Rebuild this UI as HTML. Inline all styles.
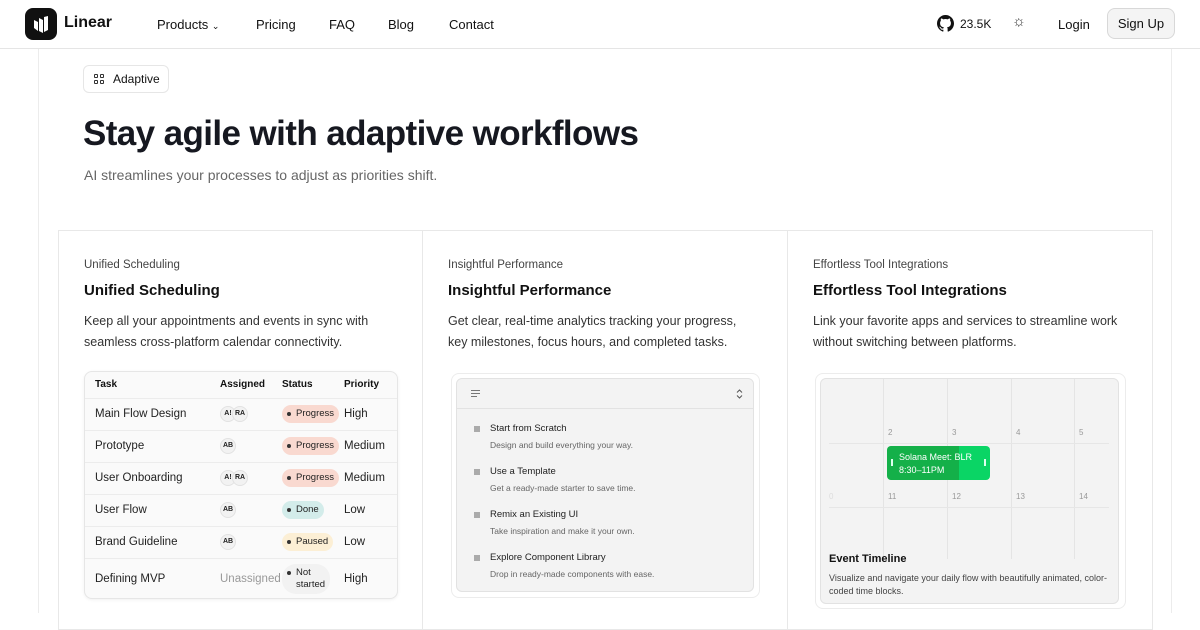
<!DOCTYPE html>
<html><head><meta charset="utf-8"><style>
*{box-sizing:border-box;margin:0;padding:0}
body{width:1200px;height:613px;overflow:hidden;background:#fff;font-family:"Liberation Sans",sans-serif;color:#111;position:relative}
.a{position:absolute}
.nav{font-size:13px;color:#111}
.card{position:absolute;top:230px;height:400px;border:1px solid #e8e8e8}
.small{font-size:11.5px;color:#444}
.h3{font-size:15px;font-weight:bold;color:#111}
.p{font-size:12.5px;color:#333;line-height:21px}
table{border-collapse:collapse;width:100%;font-size:11.5px;table-layout:fixed}
td,th{text-align:left;padding:0 0 0 10px;border-bottom:1px solid #ececec;white-space:nowrap}
th{height:26px;font-size:10px;font-weight:bold}
td{height:32px;color:#222}
.pr{padding-left:0}
.av{display:inline-block;width:16px;height:16px;border-radius:50%;background:#f2f2f2;border:1px solid #e2e2e2;font-size:7px;line-height:14px;text-align:center;font-weight:bold;vertical-align:middle}
.pill{display:inline-block;height:18px;line-height:18px;border-radius:9px;padding:0 5px 0 14px;font-size:9.5px;position:relative}
.pill:before{content:"";position:absolute;left:5px;top:7px;width:4px;height:4px;border-radius:2px;background:#333}
.it{position:absolute;left:33px;font-size:9.5px;color:#222}
.it i{position:absolute;left:-16px;top:3px;width:6px;height:6px;background:#aaa}
.it span{display:block;font-size:8.5px;color:#666;margin-top:6px}
.cal{font-size:8px;color:#999}
</style></head><body>
<div class="a" style="left:0;top:48px;width:1200px;height:1px;background:#e5e5e5"></div>
<div class="a" style="left:38px;top:49px;width:1px;height:564px;background:#ececec"></div>
<div class="a" style="left:1171px;top:49px;width:1px;height:564px;background:#ececec"></div>
<div class="a" style="left:25px;top:8px;width:32px;height:32px;border-radius:8px;background:#111">
<svg width="32" height="32" viewBox="0 0 32 32"><path d="M9 12 L13 14 V23 L9 20Z M14 10 L18 12 V25 L14 23Z M19 9 L23 8 V22 L19 24Z" fill="#fff"/></svg></div>
<div class="a" style="left:64px;top:14px;font-size:16px;font-weight:bold">Linear</div>
<div class="a nav" style="left:157px;top:17px">Products <span style="font-size:9px">&#8964;</span></div>
<div class="a nav" style="left:256px;top:17px">Pricing</div>
<div class="a nav" style="left:329px;top:17px">FAQ</div>
<div class="a nav" style="left:388px;top:17px">Blog</div>
<div class="a nav" style="left:449px;top:17px">Contact</div>
<svg class="a" style="left:937px;top:15px" width="17" height="17" viewBox="0 0 16 16"><path fill="#111" d="M8 0C3.6 0 0 3.6 0 8c0 3.5 2.3 6.5 5.5 7.6.4.1.5-.2.5-.4v-1.4c-2.2.5-2.7-1-2.7-1-.4-.9-.9-1.2-.9-1.2-.7-.5.1-.5.1-.5.8.1 1.2.8 1.2.8.7 1.3 1.9.9 2.3.7.1-.5.3-.9.5-1.1-1.8-.2-3.6-.9-3.6-4 0-.9.3-1.6.8-2.1-.1-.2-.4-1 .1-2.1 0 0 .7-.2 2.2.8.6-.2 1.3-.3 2-.3s1.4.1 2 .3c1.5-1 2.2-.8 2.2-.8.4 1.1.2 1.9.1 2.1.5.6.8 1.3.8 2.1 0 3.1-1.9 3.8-3.7 4 .3.3.6.8.6 1.5v2.2c0 .2.1.5.6.4C13.7 14.5 16 11.5 16 8c0-4.4-3.6-8-8-8z"/></svg>
<div class="a nav" style="left:960px;top:17px;font-size:12px">23.5K</div>
<div class="a" style="left:1012px;top:13px;font-size:15px;color:#333">☼</div>
<div class="a nav" style="left:1058px;top:17px">Login</div>
<div class="a" style="left:1107px;top:8px;width:68px;height:31px;border:1px solid #d8d8d8;border-radius:8px;background:#f4f4f4;font-size:13px;text-align:center;line-height:29px">Sign Up</div>

<div class="a" style="left:83px;top:65px;width:86px;height:28px;border:1px solid #e6e6e6;border-radius:6px;font-size:12px;line-height:26px;padding-left:29px">Adaptive</div>
<div class="a" style="left:94px;top:74px;width:10px;height:10px;display:grid;grid-template-columns:4px 4px;gap:2px"><i style="border:1px solid #333;border-radius:1px"></i><i style="border:1px solid #333;border-radius:1px"></i><i style="border:1px solid #333;border-radius:1px"></i><i style="border:1px solid #333;border-radius:1px"></i></div>
<div class="a" style="left:83px;top:114px;font-size:35px;font-weight:bold;color:#161820;letter-spacing:-0.6px">Stay agile with adaptive workflows</div>
<div class="a" style="left:84px;top:167px;font-size:14px;color:#666">AI streamlines your processes to adjust as priorities shift.</div>

<div class="card" style="left:58px;width:365px"></div>
<div class="card" style="left:422px;width:366px"></div>
<div class="card" style="left:787px;width:366px"></div>

<div class="a small" style="left:84px;top:259px">Unified Scheduling</div>
<div class="a h3" style="left:84px;top:282px">Unified Scheduling</div>
<div class="a p" style="left:84px;top:311px;width:320px">Keep all your appointments and events in sync with seamless cross-platform calendar connectivity.</div>
<div class="a small" style="left:448px;top:259px">Insightful Performance</div>
<div class="a h3" style="left:448px;top:282px">Insightful Performance</div>
<div class="a p" style="left:448px;top:311px;width:305px">Get clear, real-time analytics tracking your progress, key milestones, focus hours, and completed tasks.</div>
<div class="a small" style="left:813px;top:259px">Effortless Tool Integrations</div>
<div class="a h3" style="left:813px;top:282px">Effortless Tool Integrations</div>
<div class="a p" style="left:813px;top:311px;width:330px">Link your favorite apps and services to streamline work without switching between platforms.</div>

<div class="a" style="left:84px;top:371px;width:314px;height:228px;border:1px solid #e6e6e6;border-radius:8px;background:#fafafa;overflow:hidden;box-shadow:0 1px 3px rgba(0,0,0,.06)">
<table>
<colgroup><col style="width:125px"><col style="width:62px"><col style="width:72px"><col></colgroup>
<tr><th>Task</th><th>Assigned</th><th>Status</th><th class="pr">Priority</th></tr>
<tr><td>Main Flow Design</td><td><span class="av">A!</span><span class="av" style="margin-left:-4px">RA</span></td><td><span class="pill" style="background:#f9d9d0">Progress</span></td><td class="pr">High</td></tr>
<tr><td>Prototype</td><td><span class="av">AB</span></td><td><span class="pill" style="background:#f9d9d0">Progress</span></td><td class="pr">Medium</td></tr>
<tr><td>User Onboarding</td><td><span class="av">A!</span><span class="av" style="margin-left:-4px">RA</span></td><td><span class="pill" style="background:#f9d9d0">Progress</span></td><td class="pr">Medium</td></tr>
<tr><td>User Flow</td><td><span class="av">AB</span></td><td><span class="pill" style="background:#d3ecea">Done</span></td><td class="pr">Low</td></tr>
<tr><td>Brand Guideline</td><td><span class="av">AB</span></td><td><span class="pill" style="background:#fcefd5">Paused</span></td><td class="pr">Low</td></tr>
<tr><td style="height:42px;border:0">Defining MVP</td><td style="border:0;color:#999">Unassigned</td><td style="border:0"><span class="pill" style="background:#f2f2f2;height:30px;line-height:12px;padding-top:3px;border-radius:14px">Not<br>started</span></td><td class="pr" style="border:0">High</td></tr>
</table></div>

<div class="a" style="left:451px;top:373px;width:309px;height:225px;border:1px solid #ececec;border-radius:8px"></div>
<div class="a" style="left:456px;top:378px;width:298px;height:214px;border:1px solid #e2e2e2;border-radius:6px;background:#f3f3f3">
<div style="height:30px;border-bottom:1px solid #e2e2e2;position:relative">
<div class="a" style="left:14px;top:11px;width:9px;height:1px;background:#777;box-shadow:0 3px 0 #777"></div>
<div class="a" style="left:14px;top:17px;width:6px;height:1px;background:#777"></div>
<svg class="a" style="left:279px;top:10px" width="7" height="10" viewBox="0 0 7 10"><path d="M1 3.5 L3.5 1 L6 3.5 M1 6.5 L3.5 9 L6 6.5" fill="none" stroke="#555" stroke-width="1"/></svg></div>
<div class="it" style="top:44px"><i></i>Start from Scratch<span>Design and build everything your way.</span></div>
<div class="it" style="top:87px"><i></i>Use a Template<span>Get a ready-made starter to save time.</span></div>
<div class="it" style="top:130px"><i></i>Remix an Existing UI<span>Take inspiration and make it your own.</span></div>
<div class="it" style="top:173px"><i></i>Explore Component Library<span>Drop in ready-made components with ease.</span></div>
</div>

<div class="a" style="left:815px;top:373px;width:311px;height:236px;border:1px solid #ececec;border-radius:8px"></div>
<div class="a" style="left:820px;top:378px;width:299px;height:226px;border:1px solid #e2e2e2;border-radius:6px;background:#f3f3f3;overflow:hidden">
<div class="a" style="left:62px;top:0;width:1px;height:180px;background:#e4e4e4"></div>
<div class="a" style="left:126px;top:0;width:1px;height:180px;background:#e4e4e4"></div>
<div class="a" style="left:190px;top:0;width:1px;height:180px;background:#e4e4e4"></div>
<div class="a" style="left:253px;top:0;width:1px;height:180px;background:#e4e4e4"></div>
<div class="a" style="left:8px;top:64px;width:280px;height:1px;background:#e6e6e6"></div>
<div class="a" style="left:8px;top:128px;width:280px;height:1px;background:#e6e6e6"></div>
<div class="a cal" style="left:67px;top:49px">2</div><div class="a cal" style="left:131px;top:49px">3</div><div class="a cal" style="left:195px;top:49px">4</div><div class="a cal" style="left:258px;top:49px">5</div>
<div class="a cal" style="left:8px;top:113px;color:#ddd">0</div><div class="a cal" style="left:67px;top:113px">11</div><div class="a cal" style="left:131px;top:113px">12</div><div class="a cal" style="left:195px;top:113px">13</div><div class="a cal" style="left:258px;top:113px">14</div>
<div class="a" style="left:66px;top:67px;width:103px;height:34px;border-radius:4px;background:linear-gradient(90deg,#14b049 70%,#0ad565 70%);color:#fff;font-size:9px;padding:5px 0 0 12px;line-height:13px">Solana Meet: BLR<br>8:30–11PM
<i class="a" style="left:4px;top:13px;width:2px;height:7px;background:#dfe"></i><i class="a" style="right:4px;top:13px;width:2px;height:7px;background:#dfe"></i></div>
<div class="a" style="left:8px;top:174px;font-size:11px;font-weight:bold;color:#111">Event Timeline</div>
<div class="a" style="left:8px;top:193px;font-size:9px;color:#444;line-height:13px;width:285px">Visualize and navigate your daily flow with beautifully animated, color-coded time blocks.</div>
</div>
</body></html>
